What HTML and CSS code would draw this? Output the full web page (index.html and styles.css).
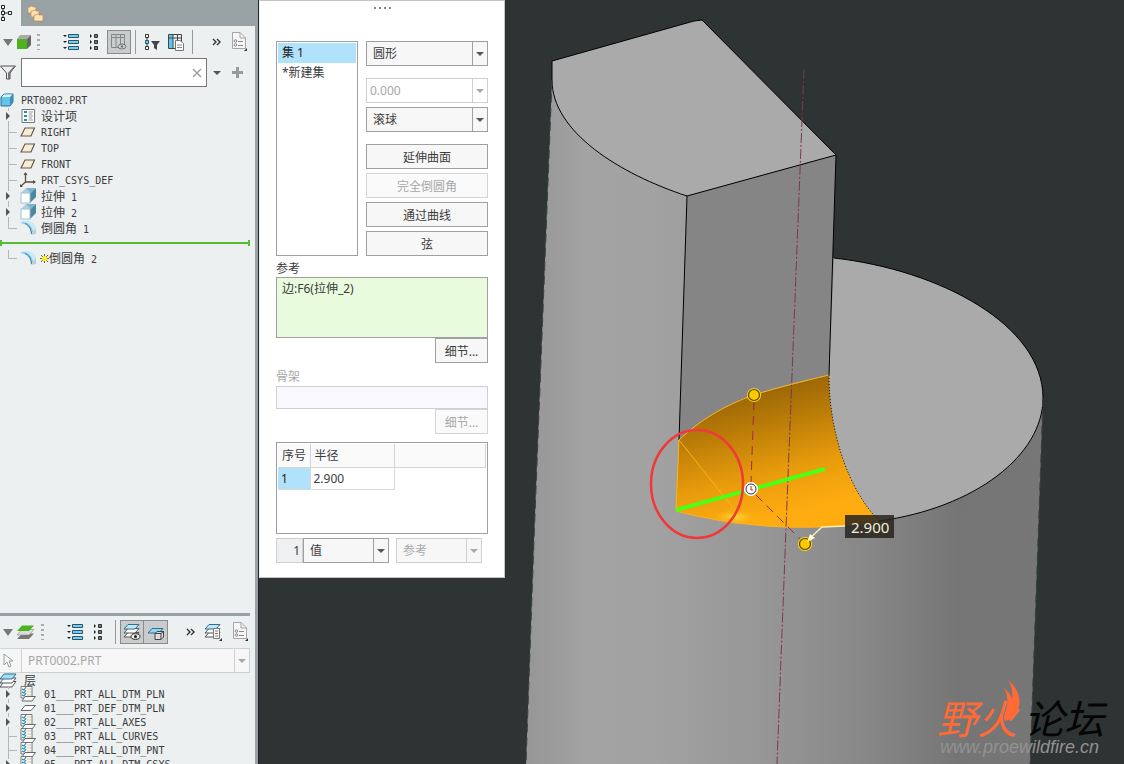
FILE: index.html
```html
<!DOCTYPE html>
<html lang="zh-CN">
<head>
    <meta charset="UTF-8">
    <meta name="viewport" content="width=device-width, initial-scale=1.0">
    <title>PRT0002</title>
    <link rel="stylesheet" href="styles.css">
</head>
<body>
    <!-- shared icons -->
    <svg class="defs" aria-hidden="true">
        <symbol id="g-arrow" viewBox="0 0 20 16"><path d="M8.500 0V3M8.500 13V16" stroke="#b4b8ba"/><path d="M6 4L10 8L6 12Z" fill="#555"/></symbol>
        <symbol id="g-branch" viewBox="0 0 20 16"><path d="M8.500 0V16M8 8.500H17" stroke="#b4b8ba" fill="none"/></symbol>
        <symbol id="g-corner" viewBox="0 0 20 16"><path d="M8.500 0V8.500H17" stroke="#b4b8ba" fill="none"/></symbol>
        <symbol id="i-plane" viewBox="0 0 16 16"><path d="M5 4H14.500L11 12H1Z" fill="#f6ecd8" stroke="#6a5847" stroke-width="1.200"/></symbol>
        <symbol id="i-extrude" viewBox="0 0 16 16"><path d="M1 5L6 0H16L10 5Z" fill="#a7cfe0"/><path d="M10 5L16 0V9L10 15Z" fill="#4b86a3"/><path d="M6 0H16L11 5Z" fill="#7fb2c9"/><rect x="1" y="5" width="9" height="10" fill="#fff" stroke="#9cc3d3"/></symbol>
        <symbol id="i-round" viewBox="0 0 16 16"><path d="M0 3L5 1C11 1 15 4 16 9L11 14C11 8 7 4 0 3Z" fill="#8fd0ee"/><path d="M5 1C11 1 15 4 16 9L13 11C12 6 8 2 3 2Z" fill="#c9ebf8"/><path d="M5 3.500C9 5 11 8 11.500 14" stroke="#3c7896" fill="none"/><path d="M16 8V14L11 15Z" fill="#c3ccd0"/></symbol>
        <symbol id="i-layer" viewBox="0 0 16 16"><path d="M1 .5H12V12H1Z" fill="#fff" stroke="#777"/><path d="M7 3H11M7 6H11M7 9H11" stroke="#d9bd94"/><path d="M2 3L4 4L6 1M2 6L4 7L6 4M2 9L4 10L6 7" stroke="#218bb0" fill="none" stroke-width="1.200"/><path d="M5 10.500H15.500L12 15H2Z" fill="#fff" stroke="#666"/></symbol>
        <symbol id="i-list" viewBox="0 0 16 16"><path d="M5.500 .5H15.500V3.500H5.500ZM5.500 6.500H15.500V9.500H5.500ZM5.500 12.500H15.500V15.500H5.500Z" fill="#6fd0f5" stroke="#2e5266"/><path d="M0 1H4L2 3ZM0 7H4L2 9ZM0 13H4L2 15Z" fill="#222"/></symbol>
        <symbol id="i-nodes" viewBox="0 0 10 16"><path d="M5.500 .5H8.500V3.500H5.500ZM5.500 6.500H8.500V9.500H5.500ZM5.500 12.500H8.500V15.500H5.500Z" fill="#777" stroke="#333"/><path d="M1 0L3 2L1 4ZM1 6L3 8L1 10ZM1 12L3 14L1 16Z" fill="#222"/></symbol>
        <symbol id="i-doc" viewBox="0 0 18 20"><path d="M2.500 .5H10L15.500 6V16.500H2.500Z" fill="#f6f6f6" stroke="#a5a5a5"/><path d="M10 .5V6H15.500" fill="none" stroke="#a5a5a5"/><circle cx="5.500" cy="9" r="1.300" fill="none" stroke="#888"/><circle cx="5.500" cy="13" r="1.300" fill="none" stroke="#888"/><path d="M8 9.500H13M8 13.500H13" stroke="#888"/><path d="M17 16V19H14Z" fill="#333"/></symbol>
        <symbol id="i-down" viewBox="0 0 8 4"><path d="M0 0H8L4 4Z" fill="currentColor"/></symbol>
    </svg>

    <div class="app">
        <aside class="sidebar">
            <section class="pane model-pane">
                <div class="tabs">
                    <button class="tab active" aria-label="模型树">
                        <svg width="14" height="20" viewBox="0 0 14 20"><path d="M1.500 2.500H4.500V5.500H1.500ZM1.500 8.500H4.500V11.500H1.500ZM1.500 14.500H4.500V17.500H1.500ZM8.500 8.500H11.500V11.500H8.500Z" fill="#fff" stroke="#222"/><path d="M3 6V8M3 12V14M5 10H8" stroke="#222"/></svg>
                    </button>
                    <button class="tab" aria-label="文件夹">
                        <svg width="17" height="17" viewBox="0 0 17 17"><g fill="#fde3b4" stroke="#b98a4b" stroke-width=".7"><path d="M1 2H3L4 1H6V2H9V8H1Z"/><path d="M4 6H6L7 5H9V6H12V12H4Z"/><path d="M7 10H9L10 9H12V10H16V16H7Z"/></g></svg>
                    </button>
                </div>

                <div class="toolbar">
                    <button class="tool narrow" aria-label="折叠"><svg class="muted" width="10" height="7" viewBox="0 0 8 4" preserveAspectRatio="none"><path d="M0 0H8L4 4Z" fill="currentColor"/></svg></button>
                    <button class="tool cube" aria-label="模型"><svg width="14" height="14" viewBox="0 0 14 14"><path d="M0 4L3 0H14L10 4Z" fill="#aaa"/><path d="M10 4L14 0V10L10 14Z" fill="#666"/><rect y="4" width="10" height="10" fill="#4cb21e"/></svg></button>
                    <span class="grip-v"></span>
                    <button class="tool" aria-label="全部展开"><svg width="16" height="16"><use href="#i-list"/></svg></button>
                    <button class="tool slim" aria-label="全部折叠"><svg width="10" height="16"><use href="#i-nodes"/></svg></button>
                    <button class="tool pressed" aria-label="树列"><svg width="16" height="16" viewBox="0 0 16 16"><path d="M.5 .5H13.500V13.500H.5ZM.5 3.500H13.500M5 .5V13.500M9.500 .5V13.500" fill="none" stroke="#888"/><ellipse cx="11" cy="12.500" rx="4" ry="2.500" fill="#ccc" stroke="#777"/><circle cx="11" cy="12.500" r="1.200" fill="#777"/></svg></button>
                    <span class="sep"></span>
                    <button class="tool" aria-label="树过滤器"><svg width="16" height="17" viewBox="0 0 16 17"><path d="M1.500 .5H4.500V3.500H1.500ZM1.500 12.500H4.500V15.500H1.500Z" fill="#fff" stroke="#333"/><path d="M1.500 6.500H4.500V9.500H1.500Z" fill="#6fd0f5" stroke="#2e5266"/><path d="M3 4V6M3 10V12" stroke="#333"/><path d="M7 7H16L13 11V16L10 14V11Z" fill="#444"/></svg></button>
                    <button class="tool" aria-label="树设置"><svg width="16" height="17" viewBox="0 0 16 17"><path d="M.5 .5H13.500V14.500H.5Z" fill="#e9eef0" stroke="#444"/><path d="M1 1H5V14H1Z" fill="#5bc8f2"/><path d="M.5 4H13.500M5 .5V14M9.500 .5V6" stroke="#444"/><path d="M7.500 6.500H12L15.500 9.500V16.500H7.500Z" fill="#fff" stroke="#777"/><path d="M9 11H14M9 13.500H14" stroke="#888"/></svg></button>
                    <span class="sep"></span>
                    <button class="tool more" aria-label="更多"><svg width="10" height="8" viewBox="0 0 10 8"><path d="M1 1L4 4L1 7M5 1L8 4L5 7" fill="none" stroke="#333" stroke-width="1.400"/></svg></button>
                    <button class="tool" aria-label="选项"><svg width="18" height="20"><use href="#i-doc"/></svg></button>
                </div>

                <div class="filter-row">
                    <label for="treeFilter" aria-label="过滤"><svg width="17" height="17" viewBox="0 0 17 17"><path d="M.5 2H15.500L10 9V15H6.500V9Z" fill="#eee" stroke="#555"/><path d="M8 9L14 2H15.500L10 9V15H8Z" fill="#777"/></svg></label>
                    <span class="filter-box">
                        <input type="text" id="treeFilter">
                        <button aria-label="清除"><svg width="10" height="10" viewBox="0 0 10 10"><path d="M1 1L9 9M9 1L1 9" stroke="#999" stroke-width="1.300"/></svg></button>
                    </span>
                    <button class="filter-btn" aria-label="过滤选项"><svg width="8" height="4"><use href="#i-down"/></svg></button>
                    <button class="filter-btn add" aria-label="添加"><svg width="11" height="11" viewBox="0 0 11 11"><path d="M5.500 0V11M0 5.500H11" stroke="#999" stroke-width="3"/></svg></button>
                </div>

                <ul class="tree">
                    <li class="root"><svg width="14" height="14" viewBox="0 0 14 14"><path d="M1 4L4 1H13V9L10 13H1Z" fill="#63c3ea" stroke="#2f6f92"/><path d="M1.500 4L4 1.500H12.500L10 4Z" fill="#d5f1fb"/><path d="M10 4L13 1.500V9L10 12.500Z" fill="#3d8fb8"/></svg><span>PRT0002.PRT</span></li>
                    <li><svg class="gutter"><use href="#g-arrow"/></svg><svg class="icon" viewBox="0 0 16 16"><path d="M2 1.500H14.500V14.500H2Z" fill="#fff" stroke="#777"/><path d="M4 3H7V5H4ZM4 7H7V9H4ZM4 11H7V13H4Z" fill="#218bb0"/><path d="M8.500 4H13M8.500 6H12M8.500 8H13M8.500 10H12M8.500 12H13" stroke="#999"/></svg><span class="cjk">设计项</span></li>
                    <li><svg class="gutter"><use href="#g-branch"/></svg><svg class="icon"><use href="#i-plane"/></svg><span>RIGHT</span></li>
                    <li><svg class="gutter"><use href="#g-branch"/></svg><svg class="icon"><use href="#i-plane"/></svg><span>TOP</span></li>
                    <li><svg class="gutter"><use href="#g-branch"/></svg><svg class="icon"><use href="#i-plane"/></svg><span>FRONT</span></li>
                    <li><svg class="gutter"><use href="#g-branch"/></svg><svg class="icon" viewBox="0 0 16 16"><path d="M5.500 1V10H15M5.500 10L1 14" fill="none" stroke="#5e4c3c" stroke-width="1.300"/><path d="M3.500 3L5.500 0L7.500 3ZM13 8L16 10L13 12ZM0 12V15H3Z" fill="#5e4c3c"/></svg><span>PRT_CSYS_DEF</span></li>
                    <li><svg class="gutter"><use href="#g-arrow"/></svg><svg class="icon"><use href="#i-extrude"/></svg><span><span class="cjk">拉伸</span> 1</span></li>
                    <li><svg class="gutter"><use href="#g-arrow"/></svg><svg class="icon"><use href="#i-extrude"/></svg><span><span class="cjk">拉伸</span> 2</span></li>
                    <li><svg class="gutter"><use href="#g-corner"/></svg><svg class="icon"><use href="#i-round"/></svg><span><span class="cjk">倒圆角</span> 1</span></li>
                    <li class="insert-here"><span class="insert-line"></span></li>
                    <li><svg class="gutter"><use href="#g-corner"/></svg><svg class="icon"><use href="#i-round"/></svg><svg class="star" width="9" height="9" viewBox="0 0 9 9"><path d="M4.500 0V9M0 4.500H9M1 1L8 8M8 1L1 8" stroke="#6d6a10"/><circle cx="4.500" cy="4.500" r="2.500" fill="#ffee22"/></svg><span><span class="cjk">倒圆角</span> 2</span></li>
                </ul>
            </section>

            <section class="pane layer-pane">
                <div class="toolbar">
                    <button class="tool narrow" aria-label="折叠"><svg class="muted" width="10" height="7" viewBox="0 0 8 4" preserveAspectRatio="none"><path d="M0 0H8L4 4Z" fill="currentColor"/></svg></button>
                    <button class="tool layers" aria-label="层"><svg width="18" height="15" viewBox="0 0 18 15"><path d="M5 8.500H17L12 14H0Z" fill="#777"/><path d="M5 4.500H17L12 10H0Z" fill="#ddd" stroke="#888" stroke-width=".6"/><path d="M5 .5H17L12 6H0Z" fill="#4cb21e"/></svg></button>
                    <span class="grip-v"></span>
                    <button class="tool" aria-label="全部展开"><svg width="16" height="16"><use href="#i-list"/></svg></button>
                    <button class="tool slim" aria-label="全部折叠"><svg width="10" height="16"><use href="#i-nodes"/></svg></button>
                    <span class="sep"></span>
                    <button class="tool pressed" aria-label="显示层"><svg width="18" height="18" viewBox="0 0 18 18"><path d="M5 9.500H16L12 14H1Z" fill="#fff" stroke="#555"/><path d="M5 5.500H16L12 10H1Z" fill="#fff" stroke="#555"/><path d="M5 1.500H16L12 6H1Z" fill="#bfe8fa" stroke="#2f6f92"/><ellipse cx="12.500" cy="13.500" rx="4.500" ry="2.800" fill="#eee" stroke="#222"/><circle cx="12.500" cy="13.500" r="1.500" fill="#222"/></svg></button>
                    <button class="tool pressed joined" aria-label="层项"><svg width="18" height="18" viewBox="0 0 18 18"><path d="M5 5.500H16L12 10H1Z" fill="#8ed8f8" stroke="#2f6f92"/><path d="M8 10.500L10 8.500H16.500V14L14 16.500H8ZM8 10.500H14V16.500M14 10.500L16.500 8.500" fill="#ddd" stroke="#444"/></svg></button>
                    <button class="tool more" aria-label="更多"><svg width="10" height="8" viewBox="0 0 10 8"><path d="M1 1L4 4L1 7M5 1L8 4L5 7" fill="none" stroke="#333" stroke-width="1.400"/></svg></button>
                    <button class="tool" aria-label="层设置"><svg width="18" height="19" viewBox="0 0 18 19"><path d="M5 9.500H16L12 14H1Z" fill="#fff" stroke="#555"/><path d="M5 5.500H16L12 10H1Z" fill="#fff" stroke="#555"/><path d="M5 1.500H16L12 6H1Z" fill="#bfe8fa" stroke="#2f6f92"/><path d="M9.500 5.500H15.500V15.500H9.500Z" fill="#fff" stroke="#777"/><path d="M11 8H14M11 10.500H14M11 13H14" stroke="#777"/><path d="M18 15V18H15Z" fill="#333"/></svg></button>
                    <button class="tool last" aria-label="选项"><svg width="18" height="20"><use href="#i-doc"/></svg></button>
                </div>

                <div class="model-row">
                    <label for="layerModel" aria-label="模型"><svg width="11" height="15" viewBox="0 0 11 15"><path d="M1 1V12L4 9L6 14L8 13L6 8H10Z" fill="#fff" stroke="#999"/></svg></label>
                    <span class="combo disabled">
                        <select id="layerModel" disabled><option>PRT0002.PRT</option></select>
                        <span class="combo-arrow"><svg width="8" height="4"><use href="#i-down"/></svg></span>
                    </span>
                </div>

                <ul class="tree layer-tree">
                    <li class="root"><svg width="17" height="15" viewBox="0 0 17 15"><path d="M4 8.500H16L12 14H0Z" fill="#fff" stroke="#555"/><path d="M4 5H16L12 10H0Z" fill="#fff" stroke="#555"/><path d="M4 1H16L12 6H0Z" fill="#a5ddf6" stroke="#2f6f92"/></svg><span class="cjk">层</span></li>
                    <li><svg class="gutter"><use href="#g-arrow"/></svg><svg class="icon"><use href="#i-layer"/></svg><span>01___PRT_ALL_DTM_PLN</span></li>
                    <li><svg class="gutter"><use href="#g-arrow"/></svg><svg class="icon" viewBox="0 0 16 16"><path d="M5 5.500H15.500L11 10.500H1Z" fill="#fff" stroke="#666"/></svg><span>01___PRT_DEF_DTM_PLN</span></li>
                    <li><svg class="gutter"><use href="#g-arrow"/></svg><svg class="icon"><use href="#i-layer"/></svg><span>02___PRT_ALL_AXES</span></li>
                    <li><svg class="gutter"><use href="#g-branch"/></svg><svg class="icon"><use href="#i-layer"/></svg><span>03___PRT_ALL_CURVES</span></li>
                    <li><svg class="gutter"><use href="#g-branch"/></svg><svg class="icon"><use href="#i-layer"/></svg><span>04___PRT_ALL_DTM_PNT</span></li>
                    <li><svg class="gutter"><use href="#g-arrow"/></svg><svg class="icon"><use href="#i-layer"/></svg><span>05___PRT_ALL_DTM_CSYS</span></li>
                </ul>
            </section>
        </aside>

        <main class="workspace">
            <svg class="scene" viewBox="259 0 865 764" preserveAspectRatio="xMinYMin slice">
                <defs>
                    <linearGradient id="body" gradientUnits="userSpaceOnUse" x1="526" y1="0" x2="1043" y2="0">
                        <stop offset="0" stop-color="#969696"/>
                        <stop offset=".12" stop-color="#a3a3a3"/>
                        <stop offset=".25" stop-color="#a2a2a2"/>
                        <stop offset=".45" stop-color="#979797"/>
                        <stop offset=".65" stop-color="#888888"/>
                        <stop offset=".84" stop-color="#757575"/>
                        <stop offset="1" stop-color="#777777"/>
                    </linearGradient>
                    <linearGradient id="round" gradientUnits="userSpaceOnUse" x1="735" y1="395" x2="765" y2="520">
                        <stop offset="0" stop-color="#9a6606"/>
                        <stop offset=".3" stop-color="#bd7e08"/>
                        <stop offset=".65" stop-color="#e79b0c"/>
                        <stop offset="1" stop-color="#ffac10"/>
                    </linearGradient>
                    <radialGradient id="glow">
                        <stop offset="0" stop-color="#ffe03c"/>
                        <stop offset="1" stop-color="#ffb010" stop-opacity="0"/>
                    </radialGradient>
                </defs>

                <!-- solid -->
                <path d="M552 62V80L545 260L534 540L526 764H1030L1038 540L1043 398L834 258L687 196Z" fill="url(#body)"/>
                <path d="M834 258C940 270 1043 325 1043 398C1043 455 975 508 879 521C847 488 829 430 829 375Z" fill="#aaaaaa"/>
                <path d="M687 196L836 155L829 375L754 395C725 405 700 420 679 440Z" fill="#858585"/>
                <path d="M552 61L694 21L702 20L836 155L687 196C620 174 552 132 552 80Z" fill="#aaaaaa"/>
                <g class="edge">
                    <path d="M552 61L694 21L702 20L836 155L687 196C620 174 552 132 552 80ZM687 196L679 440M836 155L829 375"/>
                    <path d="M834 258C940 270 1043 325 1043 398C1043 455 975 508 879 521"/>
                    <path d="M552 80L545 260L534 540L526 764M1043 398L1038 540L1030 764" stroke-dasharray="9 5" stroke="#3d4141"/>
                </g>

                <!-- round preview -->
                <path d="M829 375L754 395C725 405 700 420 679 440L676 511C730 525 800 534 879 521C847 488 829 430 829 375Z" fill="url(#round)"/>
                <ellipse cx="735" cy="517" rx="22" ry="8" fill="url(#glow)"/>
                <path d="M829 375C800 382 775 388 754 395C725 405 700 420 679 440L676 511C730 525 800 534 879 521M679 440L742 519" fill="none" stroke="#ffb31a"/>
                <path d="M829 375C829 430 847 488 879 521" fill="none" stroke="#111" stroke-dasharray="1 2"/>
                <path d="M804 69L792 375L786 528L777 764" fill="none" stroke="#7b3a47" stroke-dasharray="10 2 2 2"/>
                <path d="M754 401L751 482M756 495L801 540" stroke="#a52845" stroke-dasharray="9 6" fill="none"/>
                <path d="M676 510L825 469" stroke="#4dff12" stroke-width="4"/>
                <path d="M809 539L822 527L846 526" fill="none" stroke="#f3efb4" stroke-width="1.500"/>
                <g fill="#ffc800" stroke="#4d4500" stroke-width="1.200">
                    <circle cx="754" cy="395" r="6.500" stroke="#ffd21a"/>
                    <circle cx="754" cy="395" r="5.500"/>
                    <circle cx="805" cy="544" r="6.500" stroke="#ffd21a"/>
                    <circle cx="805" cy="544" r="5.500"/>
                </g>
                <path d="M807 542L810 534L815 538Z" fill="#fffbd0"/>
                <circle cx="751" cy="489" r="6.500" fill="#fff" stroke="#fff"/>
                <circle cx="751" cy="489" r="5" fill="#fff" stroke="#333"/>
                <path d="M751 486V490H753" fill="none" stroke="#b02b45"/>
                <ellipse cx="697" cy="484" rx="46" ry="54" fill="none" stroke="#f03a3a" stroke-width="2.600"/>
                <rect x="845" y="515" width="49" height="23" fill="#292521" fill-opacity=".86"/>
                <text class="dimension" x="851" y="533">2.900</text>

                <!-- forum mark -->
                <text class="mark" x="937" y="734" fill="#ff6a35">野火</text>
                <text class="mark" x="1024" y="734" fill="#050505">论坛</text>
                <path d="M1008 680C1018 688 1022 700 1018 709C1015 716 1010 720 1005 721C1002 717 1006 712 1007 706C1008 699 1007 693 1004 688C1008 691 1011 695 1012 699C1013 692 1012 686 1008 680Z" fill="#ff6a35"/>
                <text class="mark-url" x="940" y="753">www.proewildfire.cn</text>
            </svg>

            <form class="panel">
                <div class="panel-grip"><i></i><i></i><i></i><i></i></div>

                <div class="sets">
                    <ul class="set-list" role="listbox" aria-label="集">
                        <li class="selected" role="option" aria-selected="true">集 1</li>
                        <li role="option" aria-selected="false">*新建集</li>
                    </ul>
                    <div class="set-options">
                        <span class="combo">
                            <select aria-label="截面形状"><option>圆形</option></select>
                            <span class="combo-arrow"><svg width="8" height="4"><use href="#i-down"/></svg></span>
                        </span>
                        <span class="combo disabled value gap">
                            <input type="text" aria-label="圆锥参数" value="0.000" disabled>
                            <span class="combo-arrow"><svg width="8" height="4"><use href="#i-down"/></svg></span>
                        </span>
                        <span class="combo">
                            <select aria-label="创建方法"><option>滚球</option></select>
                            <span class="combo-arrow"><svg width="8" height="4"><use href="#i-down"/></svg></span>
                        </span>
                        <button type="button" class="btn gap">延伸曲面</button>
                        <button type="button" class="btn" disabled>完全倒圆角</button>
                        <button type="button" class="btn">通过曲线</button>
                        <button type="button" class="btn">弦</button>
                    </div>
                </div>

                <div class="field">
                    <label for="references">参考</label>
                    <textarea id="references" class="refs">边:F6(拉伸_2)</textarea>
                    <button type="button" class="btn detail">细节...</button>
                </div>

                <div class="field spine">
                    <label for="spine">骨架</label>
                    <input type="text" id="spine" disabled>
                    <button type="button" class="btn detail" disabled>细节...</button>
                </div>

                <div class="radius-box">
                    <table>
                        <thead><tr><th class="col-no">序号</th><th class="col-radius">半径</th><th></th></tr></thead>
                        <tbody><tr><td class="selected">1</td><td>2.900</td></tr></tbody>
                    </table>
                </div>

                <div class="radius-row">
                    <input type="text" class="count" aria-label="序号" value="1" readonly>
                    <span class="combo">
                        <select aria-label="半径类型"><option>值</option></select>
                        <span class="combo-arrow"><svg width="8" height="4"><use href="#i-down"/></svg></span>
                    </span>
                    <span class="combo disabled ref">
                        <select aria-label="参考类型" disabled><option>参考</option></select>
                        <span class="combo-arrow"><svg width="8" height="4"><use href="#i-down"/></svg></span>
                    </span>
                </div>
            </form>
        </main>
    </div>
</body>
</html>
```
FILE: styles.css
```css
* {
    box-sizing: border-box;
}
body {
    margin: 0;
    font-family: "Noto Sans", "Noto Sans CJK SC", sans-serif;
    font-size: 12px;
    color: #3c3c3c;
}
button, input, select, textarea {
    margin: 0;
    padding: 0;
    border: none;
    border-radius: 0;
    background: none;
    font: inherit;
    color: inherit;
    appearance: none;
}
ul {
    margin: 0;
    padding: 0;
    list-style: none;
}
svg {
    display: block;
    flex: none;
}
.defs {
    position: absolute;
    width: 0;
    height: 0;
}
.app {
    display: flex;
    height: 100vh;
    overflow: hidden;
}

/* sidebar */
.sidebar {
    flex: none;
    width: 259px;
    display: flex;
    flex-direction: column;
    background-color: #ecf0f1;
    border-right: 1px solid #23292b;
}
.pane {
    border-right: 3px solid #98a1a3;
    overflow: hidden;
}
.model-pane {
    flex: 1;
}
.layer-pane {
    flex: none;
    height: 151px;
}
.layer-pane::before {
    content: "";
    display: block;
    width: 250px;
    height: 3px;
    background-color: #98a1a3;
}
.tabs {
    display: flex;
    height: 26px;
    background-color: #98a1a3;
}
.tab {
    display: flex;
    align-items: center;
    padding: 0 6px;
}
.tab.active {
    width: 21px;
    padding: 0;
    background-color: #ecf0f1;
}
.toolbar {
    display: flex;
    align-items: center;
    height: 32px;
}
.tool {
    flex: none;
    display: flex;
    align-items: center;
    justify-content: center;
    width: 24px;
    height: 24px;
}
.tool.narrow {
    width: 15px;
}
.tool.cube {
    width: 18px;
}
.tool.layers {
    width: 22px;
}
.tool.slim {
    width: 22px;
    margin-right: 2px;
}
.tool.more {
    width: 20px;
    margin-left: 10px;
}
.layer-pane .more {
    margin-left: 13px;
}
.tool.pressed {
    border: 1px solid #8b8b8b;
    background-color: #c9cccd;
}
.tool.joined {
    border-left: none;
}
.tool.last {
    margin-left: 3px;
}
.muted {
    color: #777;
}
.grip-v {
    width: 3px;
    height: 16px;
    margin: 0 19px 0 4px;
    background: repeating-linear-gradient(#aaa 0 2px, transparent 2px 5px);
}
.sep {
    width: 1px;
    height: 24px;
    margin: 0 4px;
    background-color: #999;
}
.filter-row {
    display: flex;
    align-items: center;
    height: 29px;
    margin-bottom: 5px;
}
.filter-row label {
    width: 21px;
}
.filter-box {
    display: flex;
    width: 186px;
    height: 29px;
    border: 1px solid #777;
    background-color: #fff;
}
.filter-box input {
    flex: 1;
    min-width: 0;
    padding: 0 6px;
}
.filter-box button {
    width: 19px;
    display: flex;
    align-items: center;
    justify-content: center;
}
.filter-btn {
    display: flex;
    align-items: center;
    justify-content: center;
    width: 19px;
    height: 25px;
    color: #555;
}
.filter-btn.add {
    width: 23px;
}

/* trees */
.tree li {
    display: flex;
    align-items: center;
    height: 16px;
    font-family: "DejaVu Sans Mono", monospace;
    font-size: 10px;
    white-space: pre;
}
.tree .cjk {
    font-family: "Noto Sans CJK SC", sans-serif;
    font-size: 12px;
    line-height: 16px;
}
.tree .root svg {
    margin-right: 7px;
}
.gutter {
    width: 20px;
    height: 16px;
}
.icon {
    width: 16px;
    height: 16px;
    margin-right: 5px;
}
.star {
    margin-left: -1px;
}
.tree .insert-here {
    height: 14px;
}
.insert-line {
    width: 250px;
    height: 6px;
    border: solid #58bd35;
    border-width: 0 2px;
    background: linear-gradient(#58bd35, #58bd35) center / 100% 2px no-repeat;
}
.layer-tree li {
    height: 14px;
}
.layer-tree .icon {
    margin-right: 8px;
}
.model-row {
    display: flex;
    width: 250px;
    height: 25px;
}
.model-row label {
    display: flex;
    align-items: center;
    width: 21px;
    padding-left: 3px;
    border: 1px solid #d4d6d7;
    border-width: 1px 0;
    background-color: #f5f7f7;
}
.model-row .combo {
    flex: 1;
}

/* controls */
.combo {
    display: flex;
    height: 25px;
    border: 1px solid #a0a0a0;
    background-color: #f7f7f7;
}
.combo select, .combo input {
    flex: 1;
    min-width: 0;
    padding: 0 6px;
    opacity: 1;
}
.combo-arrow {
    display: flex;
    align-items: center;
    justify-content: center;
    width: 15px;
    border-left: 1px solid #a0a0a0;
    color: #555;
}
.combo.disabled, .combo.disabled .combo-arrow {
    border-color: #d0d0d0;
    color: #a8a8a8;
}
.combo.value {
    background-color: #fff;
}
.combo.value input {
    padding: 0 3px;
}
.btn {
    height: 25px;
    border: 1px solid #a0a0a0;
    background-color: #f7f7f7;
    text-align: center;
}
.btn:hover {
    background-color: #e4f4fc;
}
.btn:disabled {
    border-color: #d4d4d4;
    background-color: #fafafa;
    color: #a8a8a8;
}

/* graphics area */
.workspace {
    position: relative;
    flex: 1;
    min-width: 0;
    background-color: #2e3434;
}
.scene {
    width: 100%;
    height: 100%;
}
.edge {
    fill: none;
    stroke: #000;
    stroke-width: 1;
}
.dimension {
    font-size: 15px;
    fill: #f1efd2;
}
.mark {
    font-family: "Noto Sans CJK SC", sans-serif;
    font-size: 40px;
    font-style: italic;
}
.mark-url {
    font-family: "Liberation Sans", Arial, sans-serif;
    font-size: 18px;
    font-style: italic;
    fill: #929292;
}

/* round options panel */
.panel {
    position: absolute;
    top: 0;
    left: 0;
    width: 246px;
    padding: 0 16px 14px;
    border: 1px solid #c4c4c4;
    border-left-color: #f0f0f0;
    background-color: #fff;
}
.panel-grip {
    display: flex;
    justify-content: center;
    gap: 3px;
    height: 40px;
    padding-top: 6px;
}
.panel-grip i {
    width: 2px;
    height: 2px;
    background-color: #888;
}
.sets {
    display: flex;
    gap: 8px;
}
.set-list {
    flex: none;
    width: 82px;
    padding: 1px;
    border: 1px solid #a0a0a0;
}
.set-list li {
    height: 20px;
    padding-left: 4px;
    line-height: 20px;
}
.set-list .selected, .radius-box .selected {
    background-color: #b0e3fb;
    color: #222;
}
.set-options {
    flex: 1;
    min-width: 0;
    display: flex;
    flex-direction: column;
    gap: 4px;
}
.set-options .gap {
    margin-top: 8px;
}
.field {
    display: flex;
    flex-direction: column;
    padding-top: 4px;
}
.field label {
    height: 17px;
    line-height: 17px;
}
.refs {
    height: 61px;
    padding: 1px 5px;
    border: 1px solid #a0a0a0;
    background-color: #e8fbdd;
    line-height: 20px;
    resize: none;
}
.detail {
    align-self: flex-end;
    width: 53px;
}
.spine {
    padding-top: 5px;
    color: #a8a8a8;
}
.spine label {
    height: 18px;
}
.spine input {
    height: 23px;
    border: 1px solid #cfcfd6;
    background-color: #f8f8fe;
}
.radius-box {
    height: 92px;
    margin-top: 8px;
    padding: 1px;
    border: 1px solid #a0a0a0;
}
.radius-box table {
    width: 100%;
    table-layout: fixed;
    border-collapse: collapse;
}
.radius-box th {
    height: 23px;
    padding: 0 4px;
    border: 1px solid #d4d4d4;
    border-width: 0 1px 1px 0;
    background-color: #fafafa;
    font-weight: normal;
    text-align: left;
    white-space: nowrap;
    overflow: hidden;
}
.radius-box td {
    height: 22px;
    padding: 0 3px;
    border: 1px solid #d9d9d9;
    border-width: 0 1px 1px 0;
}
.radius-box .col-no {
    width: 32px;
}
.radius-box .col-radius {
    width: 84px;
}
.radius-row {
    display: flex;
    margin-top: 4px;
}
.radius-row .count {
    width: 27px;
    padding-right: 2px;
    border: 1px solid #d0d0d0;
    background-color: #eef0f2;
    text-align: right;
}
.radius-row .combo {
    width: 86px;
}
.radius-row .ref {
    margin-left: 7px;
}
```
